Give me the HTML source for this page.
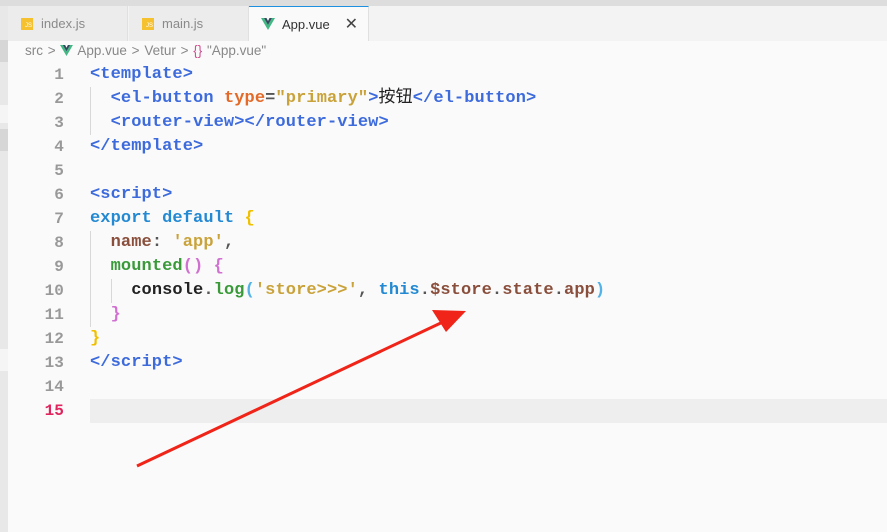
<!DOCTYPE html>
<html><head><meta charset="utf-8"><style>
*{margin:0;padding:0;box-sizing:border-box}
body{width:887px;height:532px;background:#fafafa;position:relative;overflow:hidden;font-family:"Liberation Sans","Noto Sans CJK SC",sans-serif}
.top{position:absolute;left:0;top:0;width:887px;height:6px;background:#dddddd}
.side{position:absolute;left:0;top:6px;width:8px;height:526px;background:#e8e8e8}
.band{position:absolute;left:0;width:8px}
.tabs{position:absolute;left:8px;top:6px;width:879px;height:35px;background:#f3f3f3}
.tab{position:absolute;top:0;height:35px;width:120px;background:#ececec;border-right:1px solid #e0e0e0;font-size:13px;color:#8a8a8a;line-height:35px;padding-left:33px}
.tab.act{background:#fafafa;color:#333;border-top:1px solid #1e90e0}
.js{position:absolute;left:13px;top:12px;width:12px;height:12px;background:#f5c12e;font-size:6px;color:#fff;line-height:16px;text-align:right;padding-right:1px}
.x{position:absolute;right:10px;top:0;font-size:16px;color:#444}
.bc{position:absolute;left:25px;top:43px;font-size:13.5px;color:#888;white-space:nowrap;word-spacing:1px}
.code{position:absolute;left:0;top:63px;font-family:"Liberation Mono","Noto Sans CJK SC",monospace;font-size:17px;font-weight:bold;letter-spacing:0.1px}
.l{position:absolute;height:24px;line-height:24px;white-space:pre}
.n{position:absolute;width:64px;text-align:right;color:#999;font-size:16px;left:0}
.t{position:absolute;left:90px}
.tg{color:#3d6bdc}.at{color:#e36a28}.st{color:#c9a23a}.kw{color:#2389d2}.br{color:#f0c000}.pk{color:#d070d0}.pr{color:#8a4f3c}.fn{color:#3a9a3a}.dk{color:#222}.pl{color:#555}.cy{color:#53b3e8}
.cur{position:absolute;left:90px;top:399px;width:797px;height:24px;background:#eeeeee}
.guide{position:absolute;width:1px;background:#d8d8d8}
</style></head><body>
<div class="top"></div>
<div class="side">
<div class="band" style="top:34px;height:22px;background:#d6d6d6"></div>
<div class="band" style="top:99px;height:18px;background:#f5f5f5"></div>
<div class="band" style="top:123px;height:22px;background:#d6d6d6"></div>
<div class="band" style="top:343px;height:22px;background:#f5f5f5"></div>
</div>
<div class="tabs">
<div class="tab" style="left:0"><span class="js">JS</span>index.js</div>
<div class="tab" style="left:121px"><span class="js">JS</span>main.js</div>
<div class="tab act" style="left:241px"><svg style="position:absolute;left:12px;top:11px" width="14" height="12" viewBox="0 0 14 12"><path d="M0 0h3l4 7 4-7h3L7 12z" fill="#41b883"/><path d="M3 0h2.5L7 3 8.5 0H11L7 7z" fill="#35495e"/></svg>App.vue<span class="x">✕</span></div>
</div>
<div class="bc">src &gt; <svg width="13" height="11" viewBox="0 0 14 12" style="vertical-align:-1px"><path d="M0 0h3l4 7 4-7h3L7 12z" fill="#41b883"/><path d="M3 0h2.5L7 3 8.5 0H11L7 7z" fill="#35495e"/></svg> App.vue &gt; Vetur &gt; <span style="color:#d05090">{}</span> "App.vue"</div>
<div class="cur"></div>
<div class="guide" style="left:90px;top:87px;height:48px"></div>
<div class="guide" style="left:90px;top:231px;height:96px"></div>
<div class="guide" style="left:111px;top:279px;height:24px"></div>
<div class="code">
<div class="l" style="top:0"><span class="n">1</span><span class="t"><span class="tg">&lt;template&gt;</span></span></div>
<div class="l" style="top:24px"><span class="n">2</span><span class="t">  <span class="tg">&lt;el-button</span> <span class="at">type</span><span class="pl">=</span><span class="st">"primary"</span><span class="tg">&gt;</span><span class="dk" style="font-weight:normal">按钮</span><span class="tg">&lt;/el-button&gt;</span></span></div>
<div class="l" style="top:48px"><span class="n">3</span><span class="t">  <span class="tg">&lt;router-view&gt;&lt;/router-view&gt;</span></span></div>
<div class="l" style="top:72px"><span class="n">4</span><span class="t"><span class="tg">&lt;/template&gt;</span></span></div>
<div class="l" style="top:96px"><span class="n">5</span></div>
<div class="l" style="top:120px"><span class="n">6</span><span class="t"><span class="tg">&lt;script&gt;</span></span></div>
<div class="l" style="top:144px"><span class="n">7</span><span class="t"><span class="kw">export default</span> <span class="br">{</span></span></div>
<div class="l" style="top:168px"><span class="n">8</span><span class="t">  <span class="pr">name</span><span class="pl">:</span> <span class="st">'app'</span><span class="pl">,</span></span></div>
<div class="l" style="top:192px"><span class="n">9</span><span class="t">  <span class="fn">mounted</span><span class="pk">()</span> <span class="pk">{</span></span></div>
<div class="l" style="top:216px"><span class="n">10</span><span class="t">    <span class="dk">console</span><span class="pl">.</span><span class="fn">log</span><span class="cy">(</span><span class="st">'store&gt;&gt;&gt;'</span><span class="pl">,</span> <span class="kw">this</span><span class="pl">.</span><span class="pr">$store</span><span class="pl">.</span><span class="pr">state</span><span class="pl">.</span><span class="pr">app</span><span class="cy">)</span></span></div>
<div class="l" style="top:240px"><span class="n">11</span><span class="t">  <span class="pk">}</span></span></div>
<div class="l" style="top:264px"><span class="n">12</span><span class="t"><span class="br">}</span></span></div>
<div class="l" style="top:288px"><span class="n">13</span><span class="t"><span class="tg">&lt;/script&gt;</span></span></div>
<div class="l" style="top:312px"><span class="n">14</span></div>
<div class="l" style="top:336px"><span class="n" style="color:#e0245e">15</span></div>
</div>
<svg style="position:absolute;left:0;top:0" width="887" height="532"><line x1="137" y1="466" x2="445" y2="321" stroke="#f02418" stroke-width="3"/><path d="M466 311 L432 310 L446 332 Z" fill="#f02418"/></svg>
</body></html>
